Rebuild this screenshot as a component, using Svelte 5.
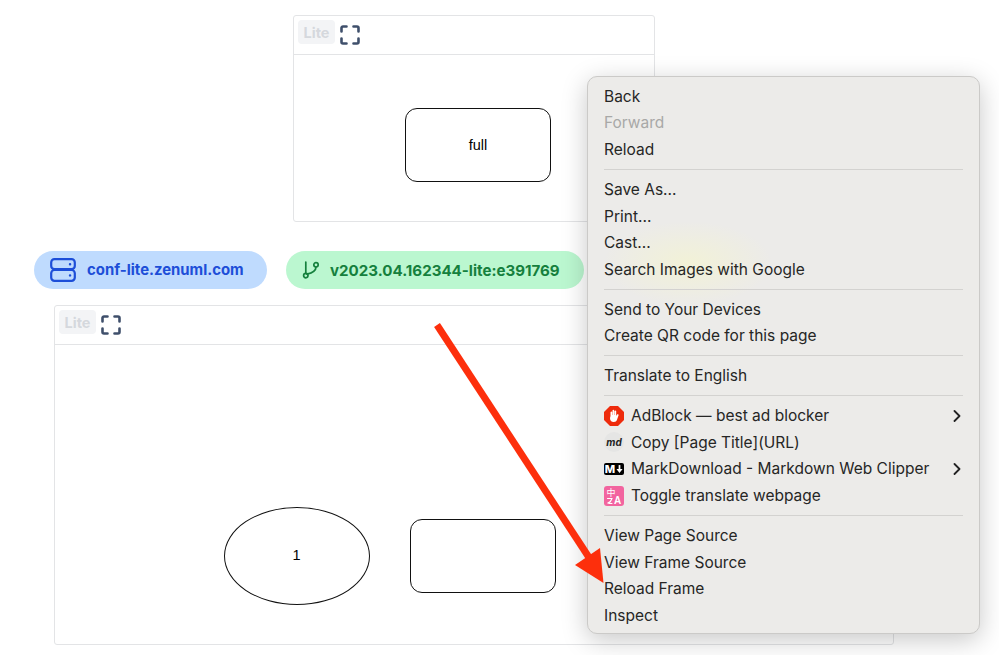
<script>
	// menu rows, null marks a separator
	const menu = [
		{ label: 'Back' },
		{ label: 'Forward', disabled: true },
		{ label: 'Reload' },
		null,
		{ label: 'Save As...' },
		{ label: 'Print...' },
		{ label: 'Cast...' },
		{ label: 'Search Images with Google' },
		null,
		{ label: 'Send to Your Devices' },
		{ label: 'Create QR code for this page' },
		null,
		{ label: 'Translate to English' },
		null,
		{ label: 'AdBlock — best ad blocker', icon: 'adblock', more: true },
		{ label: 'Copy [Page Title](URL)', icon: 'md' },
		{ label: 'MarkDownload - Markdown Web Clipper', icon: 'mark', more: true },
		{ label: 'Toggle translate webpage', icon: 'translate' },
		null,
		{ label: 'View Page Source' },
		{ label: 'View Frame Source' },
		{ label: 'Reload Frame' },
		{ label: 'Inspect' }
	];
</script>

{#snippet toolbar()}
	<div class="toolbar">
		<span class="lite">Lite</span>
		<svg class="expand" viewBox="0 0 20 20" width="20" height="20" fill="none" stroke="currentColor" stroke-width="2.6" stroke-linecap="round" stroke-linejoin="round">
			<path d="M1.5 6.5V3a1.5 1.5 0 0 1 1.5-1.5h3.5M13.5 1.5H17A1.5 1.5 0 0 1 18.5 3v3.500M18.500 13.500V17a1.500 1.500 0 0 1-1.500 1.500h-3.500M6.500 18.500H3A1.500 1.500 0 0 1 1.500 17v-3.500" />
		</svg>
	</div>
{/snippet}

<div class="page">
	<section class="card card-top">
		{@render toolbar()}
		<div class="canvas">
			<div class="node rect" style="left: 111px; top: 53px;">full</div>
		</div>
	</section>

	<div class="pills">
		<div class="pill pill-blue">
			<svg viewBox="0 0 26 24" width="26" height="24" fill="none" stroke="currentColor" stroke-width="2.200" stroke-linecap="round">
				<rect x="1.200" y="1.200" width="23.600" height="10" rx="3.200" />
				<rect x="1.200" y="12" width="23.600" height="10.800" rx="3.200" />
				<path d="M20 6.200h.1M20 17.400h.1" stroke-width="2.400" />
			</svg>
			<span>conf-lite.zenuml.com</span>
		</div>
		<div class="pill pill-green">
			<svg viewBox="0 0 18 18" width="18" height="18" fill="none" stroke="currentColor" stroke-width="1.700" stroke-linecap="round">
				<circle cx="3.800" cy="14.600" r="2.200" />
				<circle cx="14" cy="3.800" r="2.200" />
				<path d="M3.800 12.400V1M14 6c0 4-4 6-9 7.200" />
			</svg>
			<span>v2023.04.162344-lite:e391769</span>
		</div>
	</div>

	<section class="card card-bottom">
		{@render toolbar()}
		<div class="canvas">
			<div class="node ellipse" style="left: 169px; top: 162px;"><span class="one">1</span></div>
			<div class="node rect" style="left: 355px; top: 174px;"></div>
		</div>
	</section>

	<div class="menu">
		{#each menu as item}
			{#if item === null}
				<div class="sep"></div>
			{:else}
				<div class="row" class:disabled={item.disabled}>
					{#if item.icon === 'adblock'}
						<svg class="ic" viewBox="0 0 20 20" width="20" height="20">
							<path d="M6 0h8l6 6v8l-6 6H6l-6-6V6Z" fill="#ee2b0c" />
							<path d="M6.500 10V6.200a.9.9 0 0 1 1.700 0V9h.3V4.400a.9.900 0 0 1 1.700 0V9h.3V5a.9.900 0 0 1 1.700 0v5l.7-1.300c.6-1 2-.4 1.600.7l-1.500 4.300c-.5 1.300-1.500 2.300-3.200 2.300-2.500 0-3.800-1.500-3.800-4Z" fill="#fff" />
						</svg>
					{:else if item.icon === 'md'}
						<span class="ic md">md</span>
					{:else if item.icon === 'mark'}
						<span class="ic mark">M<svg viewBox="0 0 8 9" width="7" height="8"><path d="M4 0v5" stroke="#fff" stroke-width="2" /><path d="M0.500 4.500h7L4 9Z" fill="#fff" /></svg></span>
					{:else if item.icon === 'translate'}
						<svg class="ic" viewBox="0 0 20 20" width="20" height="20">
							<rect width="20" height="20" rx="3" fill="#f2649f" />
							<text x="2.500" y="10" class="zh">中</text>
							<path d="M3.500 12.500h4.500c-.5 2-2 3.500-4 4.500 1 .5 2.500.5 4 .5" fill="none" stroke="#fff" stroke-width="1.100" stroke-linecap="round" />
							<text x="10" y="18" class="en">A</text>
						</svg>
					{/if}
					<span class="label">{item.label}</span>
					{#if item.more}
						<svg class="chev" viewBox="0 0 8 12" width="8" height="12" fill="none" stroke="#222" stroke-width="1.800" stroke-linecap="round" stroke-linejoin="round">
							<path d="M1.500 1l5 5-5 5" />
						</svg>
					{/if}
				</div>
			{/if}
		{/each}
	</div>

	<svg class="arrow" viewBox="0 0 999 655" width="999" height="655">
		<path d="M437 325L590 559" stroke="#fd2f0c" stroke-width="7" fill="none" />
		<path d="M603.500 583L575 565L600 548Z" fill="#fd2f0c" />
	</svg>
</div>

<style>
	:global(body) {
		margin: 0;
		background: #fff;
	}

	.page {
		position: relative;
		width: 999px;
		height: 655px;
		overflow: hidden;
		padding-top: 15px;
		box-sizing: border-box;
		font-family: Inter, 'Liberation Sans', sans-serif;
	}

	.card {
		box-sizing: border-box;
		background: #fff;
		border: 1px solid #e3e4e6;
		border-radius: 3px;
		display: flex;
		flex-direction: column;
	}

	.card-top {
		margin-left: 293px;
		width: 362px;
		height: 207px;
	}

	.card-bottom {
		margin-left: 54px;
		margin-top: 16px;
		width: 840px;
		height: 340px;
	}

	.toolbar {
		height: 39px;
		box-sizing: border-box;
		border-bottom: 1px solid #e3e4e6;
		display: flex;
		align-items: flex-start;
		gap: 5px;
		padding: 4px 0 0 4px;
		flex-shrink: 0;
	}

	.lite {
		width: 37px;
		height: 24px;
		border-radius: 4px;
		background: #f3f4f6;
		color: #d5d8dd;
		font-size: 14.5px;
		font-weight: 700;
		display: flex;
		align-items: center;
		justify-content: center;
	}

	.expand {
		color: #3f4f6b;
		margin-top: 4.500px;
	}

	.canvas {
		position: relative;
		flex: 1;
	}

	.node {
		position: absolute;
		box-sizing: border-box;
		width: 146px;
		border: 1.500px solid #111;
		display: flex;
		align-items: center;
		justify-content: center;
		font-family: 'Liberation Sans', Arial, sans-serif;
		font-size: 14.5px;
		color: #000;
	}

	.one {
		margin: -2px 1px 0 0;
	}

	.rect {
		height: 74px;
		border-radius: 12px;
	}

	.ellipse {
		height: 98px;
		border-radius: 50%;
	}

	.pills {
		display: flex;
		gap: 19px;
		margin-top: 29px;
		padding-left: 34px;
	}

	.pill {
		height: 38px;
		box-sizing: border-box;
		border-radius: 19px;
		display: flex;
		align-items: center;
		font-size: 14.9px;
		font-weight: 700;
	}

	.pill-blue {
		width: 233px;
		padding-left: 16px;
		gap: 11px;
		background: #bfdbfe;
		color: #1d4ed8;
	}

	.pill-green {
		width: 298px;
		padding-left: 16px;
		gap: 10px;
		background: #bbf7d0;
		color: #15803d;
		font-size: 15.1px;
	}

	.arrow {
		position: absolute;
		left: 0;
		top: 0;
		pointer-events: none;
	}

	.menu {
		position: absolute;
		left: 587px;
		top: 76px;
		width: 393px;
		height: 558px;
		box-sizing: border-box;
		padding: 6px 16px 0;
		background:
			radial-gradient(ellipse 85px 42px at 100px 186px, rgba(245, 245, 205, 0.65), rgba(245, 245, 205, 0)),
			#ecebe9;
		border: 1px solid #cbcac8;
		border-radius: 10px;
		box-shadow: 0 6px 26px rgba(0, 0, 0, 0.22);
		color: #262625;
		font-size: 15.5px;
	}

	.row {
		height: 26.600px;
		display: flex;
		align-items: center;
		gap: 7px;
		white-space: nowrap;
	}

	.disabled {
		color: #a8a8a7;
	}

	.chev {
		margin-left: auto;
		margin-right: 2px;
	}

	.sep {
		height: 1px;
		margin: 6.200px 0;
		background: #d3d2d0;
	}

	.ic {
		width: 20px;
		height: 20px;
		flex-shrink: 0;
	}

	.md {
		border-radius: 50%;
		background: #e5e5e4;
		font-size: 10px;
		font-weight: 700;
		font-style: italic;
		color: #222;
		display: flex;
		align-items: center;
		justify-content: center;
	}

	.mark {
		height: 12px;
		background: #000;
		border-radius: 2px;
		color: #fff;
		font-size: 11px;
		font-weight: 800;
		display: flex;
		align-items: center;
		justify-content: center;
		gap: 1px;
	}

	.zh {
		font-family: 'Noto Sans CJK SC', sans-serif;
		font-size: 9px;
		fill: #fff;
	}

	.en {
		font-family: 'Liberation Sans', sans-serif;
		font-size: 10px;
		font-weight: 700;
		fill: #fff;
	}
</style>
